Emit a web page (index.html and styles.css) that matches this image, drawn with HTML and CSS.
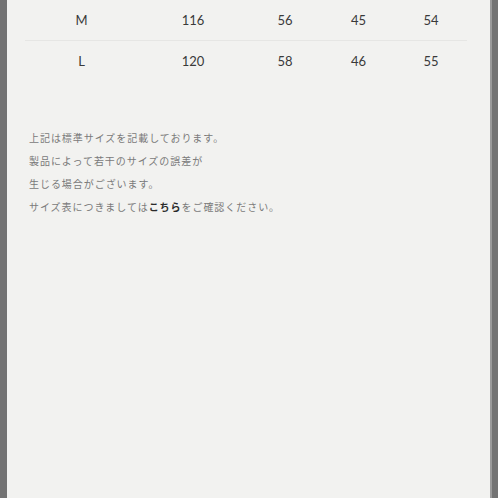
FILE: index.html
```html
<!DOCTYPE html>
<html lang="ja">
<head>
<meta charset="utf-8">
<link rel="stylesheet" href="styles.css">
</head>
<body>
<div class="frame">
  <div class="panel">
    <table class="size-table">
      <colgroup>
        <col class="c1"><col class="c2"><col class="c3"><col class="c4"><col class="c5">
      </colgroup>
      <tbody>
        <tr class="row first"><td>M</td><td>116</td><td>56</td><td>45</td><td>54</td></tr>
        <tr class="row"><td>L</td><td>120</td><td>58</td><td>46</td><td>55</td></tr>
      </tbody>
    </table>
    <div class="notes">
      <p>上記は標準サイズを記載しております。</p>
      <p>製品によって若干のサイズの誤差が</p>
      <p>生じる場合がございます。</p>
      <p>サイズ表につきましては<a class="link" href="#">こちら</a>をご確認ください。</p>
    </div>
  </div>
  <div class="edge"></div>
</div>
</body>
</html>
```

FILE: styles.css
```css
html, body {
  margin: 0;
  padding: 0;
  height: 100%;
}
body {
  background: #737373;
  overflow: hidden;
}
.frame {
  display: flex;
  height: 498px;
  padding-left: 7px;
}
.panel {
  width: 483px;
  height: 100%;
  background: #f2f2f0;
  padding: 0 23px 0 18px;
  box-sizing: border-box;
}
.edge {
  width: 2px;
  background: #9a9a9a;
}
.size-table {
  width: 442px;
  border-collapse: collapse;
  table-layout: fixed;
  font-family: "Lato", "Open Sans", sans-serif;
  font-size: 13px;
  color: #3a3a3a;
  margin-top: -1px;
}
.c1 { width: 113px; }
.c2 { width: 110px; }
.c3 { width: 74px; }
.c4 { width: 73px; }
.c5 { width: 72px; }
.row td {
  height: 40px;
  padding: 0;
  text-align: center;
  vertical-align: middle;
}
.row.first td {
  border-top: 1px solid #e8e8e6;
  border-bottom: 1px solid #e6e6e4;
}
.notes {
  margin-top: 45px;
  padding-left: 4px;
  font-family: "Noto Sans CJK JP", "Noto Sans", sans-serif;
  font-size: 10px;
  letter-spacing: 0.95px;
  color: #7a7a7a;
}
.notes p {
  margin: 0;
  height: 23px;
  line-height: 23px;
}
.link {
  color: #2a2a2a;
  font-weight: bold;
  text-decoration: none;
}
```
